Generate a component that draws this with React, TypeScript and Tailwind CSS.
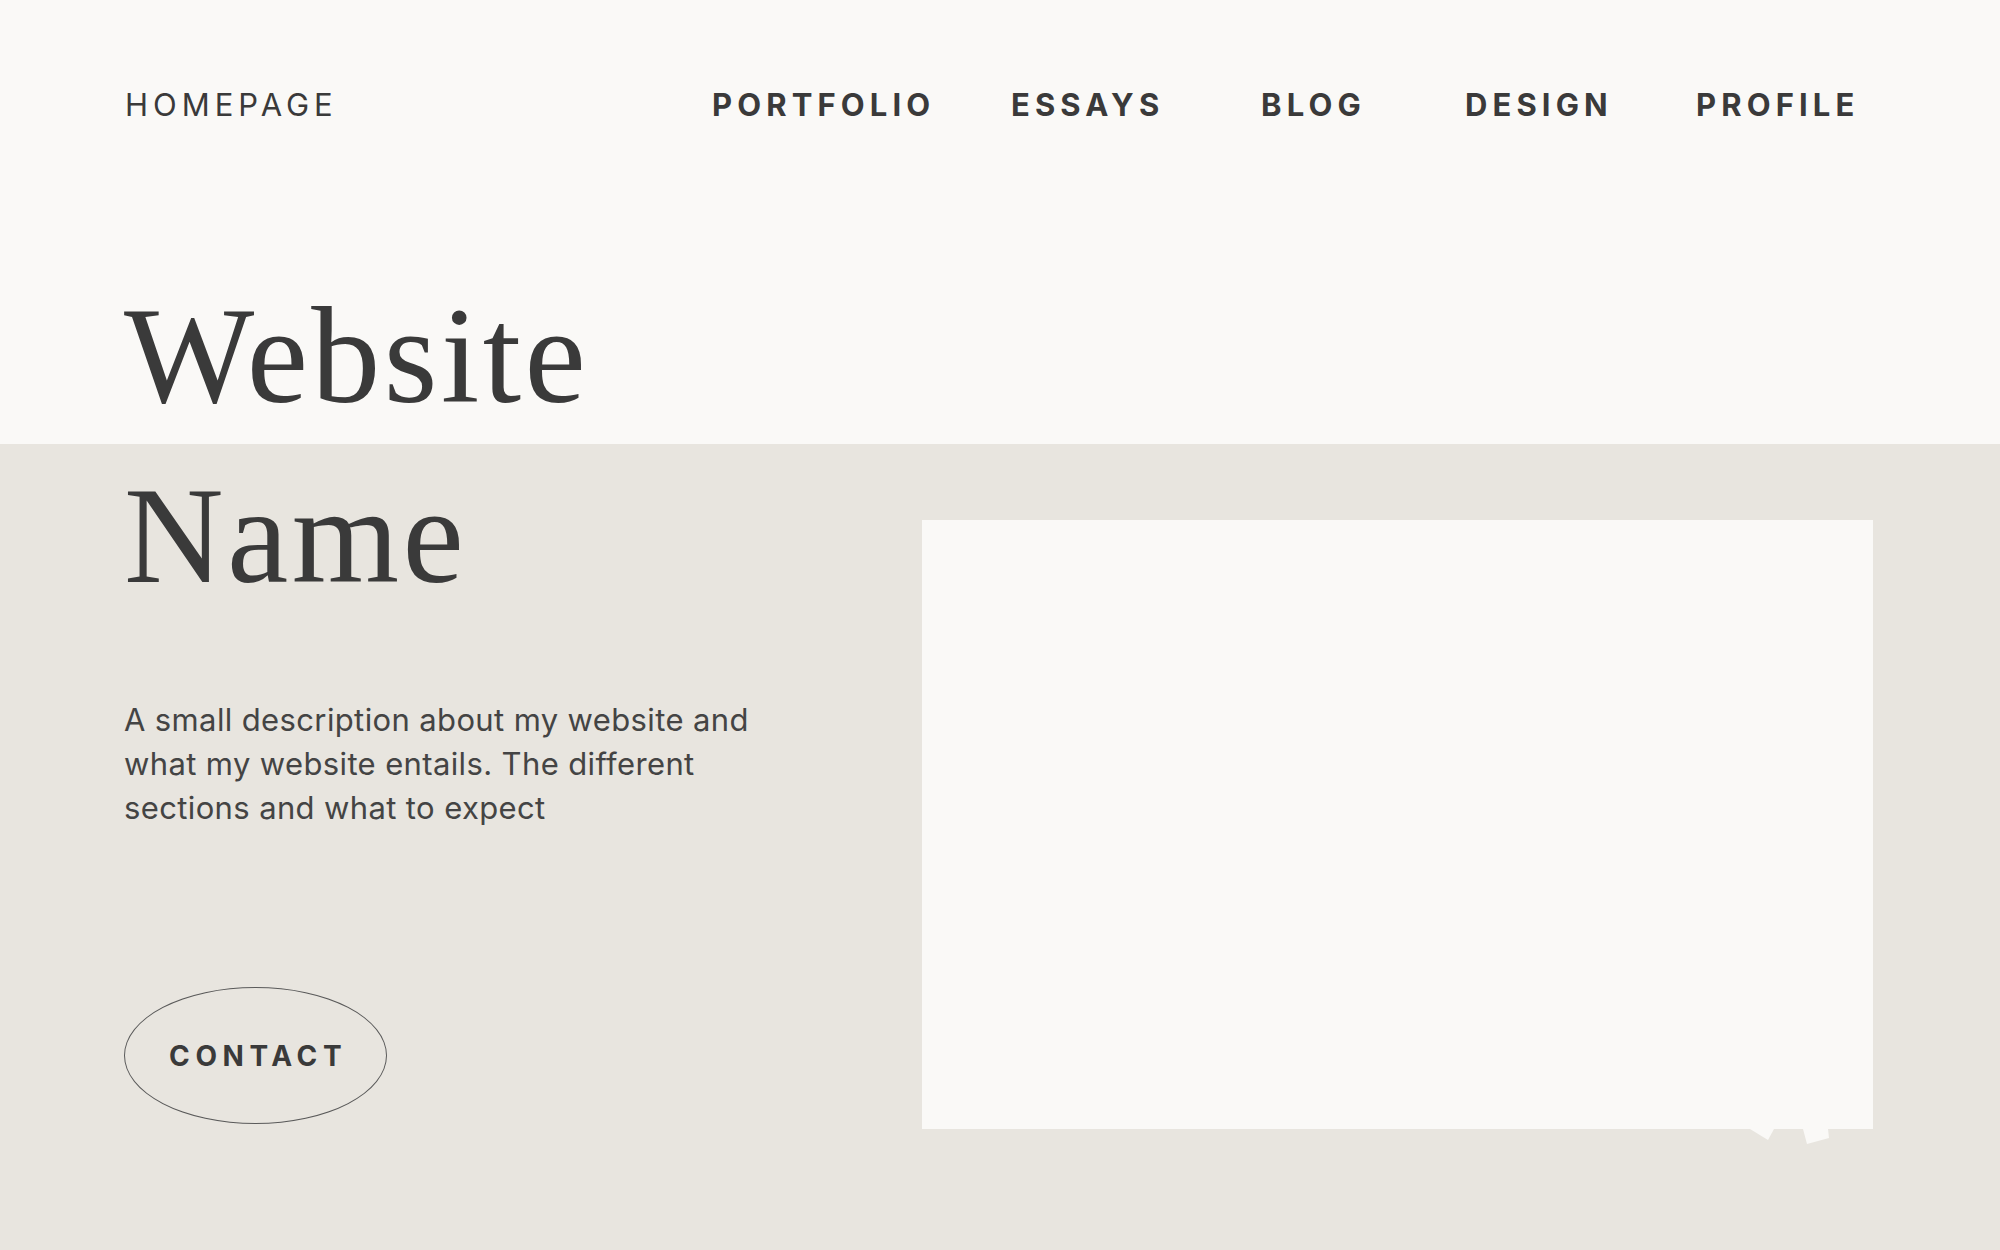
import React from "react";

const navItems = [
  { label: "PORTFOLIO", w: "w-[299px]" },
  { label: "ESSAYS", w: "w-[250px]" },
  { label: "BLOG", w: "w-[204px]" },
  { label: "DESIGN", w: "w-[231px]" },
  { label: "PROFILE", w: "" },
];

export default function App() {
  return (
    <div className="min-h-screen w-full bg-[linear-gradient(to_bottom,#faf9f7_444px,#e8e5df_444px)] font-['Inter',sans-serif] text-[#3a3a3a]">
      {/* top bar */}
      <header className="flex h-[210px] items-center pl-[125px] pr-[127px]">
        <div className="w-[587px] text-[31px] tracking-[0.16em]">HOMEPAGE</div>
        <nav className="flex">
          {navItems.map((item) => (
            <a key={item.label} href="#" className={`${item.w} text-[31px] font-bold tracking-[0.165em]`}>
              {item.label}
            </a>
          ))}
        </nav>
      </header>

      {/* hero */}
      <main className="flex mt-[56px] pl-[124px] pr-[127px] pb-[120px]">
        <div className="flex w-[700px] flex-col items-start">
          <h1 className="font-['Liberation_Serif',serif] text-[138px] leading-[180px] font-normal tracking-[0.025em]">
            Website
            <br />
            Name
          </h1>
          <p className="mt-[72px] w-[645px] text-[31px] leading-[44px] tracking-[0.012em] text-[#444]">
            A small description about my website and what my website entails. The different sections and what to
            expect
          </p>
          <button className="mt-[157px] flex h-[137px] w-[263px] items-center justify-center rounded-[50%] border border-[#5a5a5a] pl-[0.19em] text-[28px] font-bold tracking-[0.2em]">
            CONTACT
          </button>
        </div>

        <div className="relative ml-auto mt-[254px] h-[609px] w-[951px] bg-[#faf9f7]">
          <svg className="absolute left-0 top-full" width="951" height="20" viewBox="0 0 951 20">
            <polygon points="828,0 852,0 846,11" fill="#faf9f7" />
            <polygon points="881,0 906,0 907,9 885,15" fill="#faf9f7" />
          </svg>
        </div>
      </main>
    </div>
  );
}
